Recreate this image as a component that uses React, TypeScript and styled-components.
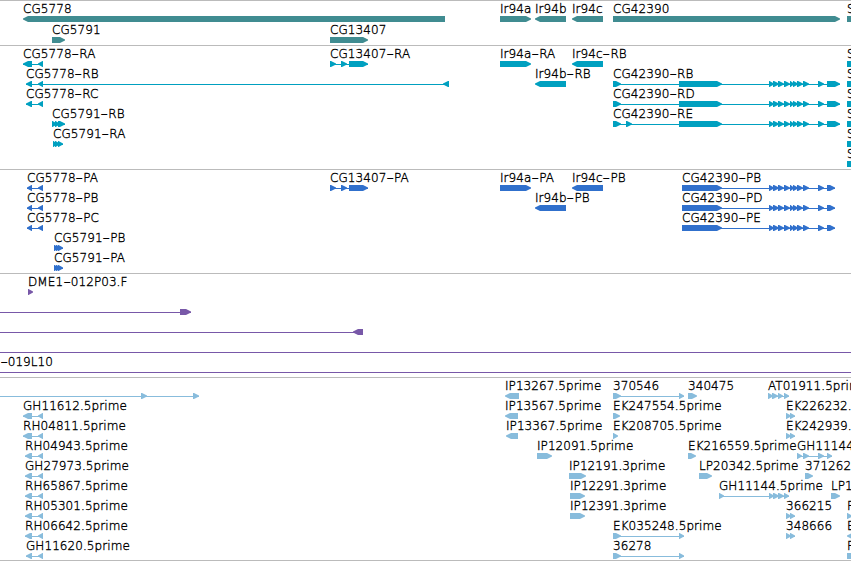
import React from "react";
import styled, { createGlobalStyle } from "styled-components";

const GlobalStyle = createGlobalStyle`
  body { margin: 0; background: #fff; overflow: hidden; }
`;

type Dir = "l" | "r";
/** start and end coordinate of one exon */
type Exon = [number, number];
interface Feature {
  x: number;
  label?: string;
  dir?: Dir;
  exons: Exon[];
  from?: number;
  to?: number;
}
interface TrackData {
  color: string;
  rowHeight: number;
  height: number;
  rows: Feature[][];
}

const Browser = styled.main`
  display: flex;
  flex-direction: column;
  width: 851px;
  height: 561px;
  overflow: hidden;
  background: #fff;
`;

const Track = styled.section<{ $height: number; $last?: boolean }>`
  box-sizing: border-box;
  flex: none;
  height: ${(p) => p.$height}px;
  border-top: 1px solid #bbb;
  border-bottom: ${(p) => (p.$last ? "1px solid #bbb" : "0")};
`;

const Row = styled.div<{ $height: number }>`
  position: relative;
  height: ${(p) => p.$height}px;
`;

/* Features sit at their genomic coordinate inside the row. */
const Label = styled.span<{ $x: number }>`
  position: absolute;
  top: 0;
  left: ${(p) => p.$x}px;
  font: 200 12px/17px "DejaVu Sans", sans-serif;
  letter-spacing: 0.07px;
  -webkit-text-stroke: 0.35px #000;
  color: #000;
  white-space: pre;
`;

const Hyphen = styled.span`
  display: inline-block;
  width: 4.3px;
  margin: 0 1.7px;
  transform: scaleX(1.7);
`;

const Glyphs = styled.svg`
  position: absolute;
  top: 15px;
  left: 0;
  display: block;
`;

function exonPath([a, b]: Exon, dir: Dir) {
  const head = Math.min(b - a - 0.5, 5);
  return dir === "r"
    ? `M${a} 0H${b - head}L${b} 2.6V3.6L${b - head} 6H${a}Z`
    : `M${b} 0H${a + head}L${a} 2.6V3.6L${a + head} 6H${b}Z`;
}

const f = (x: number, label: string, dir: Dir, ...exons: Exon[]): Feature => ({ x, label, dir, exons });
const block = (x: number, label: string): Feature => ({ x, label, dir: "r", exons: [[x, 870]] });

const cluster: Exon[] = [
  [769, 774], [773, 779], [778, 784], [784, 790], [790, 794],
  [793, 798], [797, 803], [803, 809], [818, 824],
];
const tail: Exon[] = [[769, 774], [773, 779], [778, 784], [784, 789]];
const long: Exon[] = [[613, 621], [679, 684]];
const pair: Exon[] = [[786, 791], [790, 795]];

const tracks: TrackData[] = [
  {
    color: "#408c91", rowHeight: 21, height: 45,
    rows: [
      [
        f(23, "CG5778", "l", [23, 445]), f(500, "Ir94a", "r", [500, 531]),
        f(535, "Ir94b", "l", [535, 566]), f(572, "Ir94c", "l", [572, 603]),
        f(613, "CG42390", "r", [613, 840]), block(847, "S"),
      ],
      [f(52, "CG5791", "r", [52, 65]), f(330, "CG13407", "r", [330, 368])],
    ],
  },
  {
    color: "#00a0c0", rowHeight: 20, height: 124,
    rows: [
      [
        f(23, "CG5778-RA", "l", [23, 32], [38, 43]),
        f(330, "CG13407-RA", "r", [330, 336], [341, 347], [349, 368]),
        f(500, "Ir94a-RA", "r", [500, 531]), f(572, "Ir94c-RB", "l", [572, 603]),
        block(847, "S"),
      ],
      [
        f(26, "CG5778-RB", "l", [26, 32], [38, 43], [443, 449]),
        f(535, "Ir94b-RB", "l", [535, 566]),
        f(613, "CG42390-RB", "r", [613, 621], [679, 722], ...cluster, [827, 840]),
        block(847, "S"),
      ],
      [
        f(26, "CG5778-RC", "l", [26, 32], [38, 43]),
        f(613, "CG42390-RD", "r", [613, 621], [679, 722], ...cluster, [827, 840]),
        block(847, "S"),
      ],
      [
        f(52, "CG5791-RB", "r", [52, 57], [55, 60], [58, 65]),
        f(613, "CG42390-RE", "r", [613, 621], [626, 632], [679, 722], ...cluster, [827, 840]),
        block(847, "S"),
      ],
      [f(53, "CG5791-RA", "r", [53, 57], [55, 60], [58, 63]), block(847, "S")],
      [block(847, "S")],
    ],
  },
  {
    color: "#3070cc", rowHeight: 20, height: 104,
    rows: [
      [
        f(27, "CG5778-PA", "l", [27, 32], [38, 43]),
        f(330, "CG13407-PA", "r", [330, 336], [341, 347], [349, 368]),
        f(500, "Ir94a-PA", "r", [500, 531]), f(572, "Ir94c-PB", "l", [572, 603]),
        f(682, "CG42390-PB", "r", [682, 722], ...cluster, [827, 835]),
      ],
      [
        f(27, "CG5778-PB", "l", [27, 32], [38, 43]), f(535, "Ir94b-PB", "l", [535, 566]),
        f(682, "CG42390-PD", "r", [682, 722], ...cluster, [827, 835]),
      ],
      [
        f(27, "CG5778-PC", "l", [27, 32], [38, 43]),
        f(682, "CG42390-PE", "r", [682, 722], ...cluster, [827, 835]),
      ],
      [f(54, "CG5791-PB", "r", [54, 59], [56, 61], [58, 63])],
      [f(54, "CG5791-PA", "r", [54, 59], [56, 61], [58, 63])],
    ],
  },
  {
    color: "#7858a8", rowHeight: 20, height: 104,
    rows: [
      [f(28, "DME1-012P03.F", "r", [28, 33])],
      [{ x: 0, dir: "r", exons: [[180, 191]], from: 0 }],
      [{ x: 0, dir: "l", exons: [[353, 363]], from: 0 }],
      [{ x: 0, exons: [], from: 0, to: 851 }],
      [{ x: 0, label: "-019L10", exons: [], from: 0, to: 851 }],
    ],
  },
  {
    color: "#88bcdc", rowHeight: 20, height: 184,
    rows: [
      [
        { x: 0, dir: "r", exons: [[141, 147], [193, 199]], from: 0 },
        f(505, "IP13267.5prime", "l", [505, 519]), f(613, "370546", "r", ...long),
        f(688, "340475", "r", [688, 697]),
        f(768, "AT01911.5prime", "r", [768, 773], [772, 778], [778, 783], [784, 789]),
      ],
      [
        f(23, "GH11612.5prime", "l", [23, 32], [38, 43]), f(505, "IP13567.5prime", "l", [505, 518]),
        f(613, "EK247554.5prime", "r", [613, 620]), f(786, "EK226232.5prime", "r", ...pair),
      ],
      [
        f(23, "RH04811.5prime", "l", [23, 32], [38, 43]), f(506, "IP13367.5prime", "l", [506, 518]),
        f(613, "EK208705.5prime", "r", [613, 618]), f(786, "EK242939.5prime", "r", ...pair),
      ],
      [
        f(25, "RH04943.5prime", "l", [25, 32], [38, 43]), f(537, "IP12091.5prime", "r", [537, 552]),
        f(688, "EK216559.5prime", "r", [688, 696]),
        f(797, "GH11144.3prime", "r", [797, 802], [803, 809], [818, 824], [827, 832]),
      ],
      [
        f(25, "GH27973.5prime", "l", [25, 32], [38, 43]), f(569, "IP12191.3prime", "r", [569, 586]),
        f(699, "LP20342.5prime", "r", [699, 712]), f(805, "371262", "r", [805, 813]),
      ],
      [
        f(25, "RH65867.5prime", "l", [25, 32], [38, 43]), f(570, "IP12291.3prime", "r", [570, 585]),
        f(719, "GH11144.5prime", "r", [719, 724], ...tail), f(831, "LP1", "r", [831, 840]),
      ],
      [
        f(25, "RH05301.5prime", "l", [25, 32], [38, 43]), f(570, "IP12391.3prime", "r", [570, 585]),
        f(786, "366215", "r", ...pair), f(847, "F", "r", [847, 852]),
      ],
      [
        f(25, "RH06642.5prime", "l", [25, 32], [38, 43]), f(613, "EK035248.5prime", "r", ...long),
        f(786, "348666", "r", ...pair), f(847, "E", "l", [847, 854]),
      ],
      [
        f(26, "GH11620.5prime", "l", [26, 32], [38, 43]), f(613, "36278", "r", ...long),
        block(847, "F"),
      ],
    ],
  },
];

function FeatureLabel({ x, text }: { x: number; text: string }) {
  const [head, rest] = text.split("-");
  return (
    <Label $x={x}>
      {head}
      {rest !== undefined && <Hyphen>-</Hyphen>}
      {rest}
    </Label>
  );
}

function FeatureRow({ features, color, height }: { features: Feature[]; color: string; height: number }) {
  return (
    <Row $height={height}>
      <Glyphs width={851} height={6} fill={color}>
        {features.map((ft, i) => {
          const last = ft.exons[ft.exons.length - 1];
          const start = ft.from ?? ft.exons[0][0];
          const end = ft.to ?? last[1];
          const line = ft.from !== undefined || ft.exons.length > 1;
          return (
            <g key={i}>
              {line && <rect x={start} y={3} width={end - start} height={1} />}
              {ft.exons.map((e, j) => (
                <path key={j} d={exonPath(e, ft.dir ?? "r")} />
              ))}
            </g>
          );
        })}
      </Glyphs>
      {features.map((ft, i) => ft.label && <FeatureLabel key={i} x={ft.x} text={ft.label} />)}
    </Row>
  );
}

export default function App() {
  return (
    <Browser>
      <GlobalStyle />
      {tracks.map((t, i) => (
        <Track key={i} $height={t.height} $last={i === tracks.length - 1}>
          {t.rows.map((r, j) => (
            <FeatureRow key={j} features={r} color={t.color} height={t.rowHeight} />
          ))}
        </Track>
      ))}
    </Browser>
  );
}
